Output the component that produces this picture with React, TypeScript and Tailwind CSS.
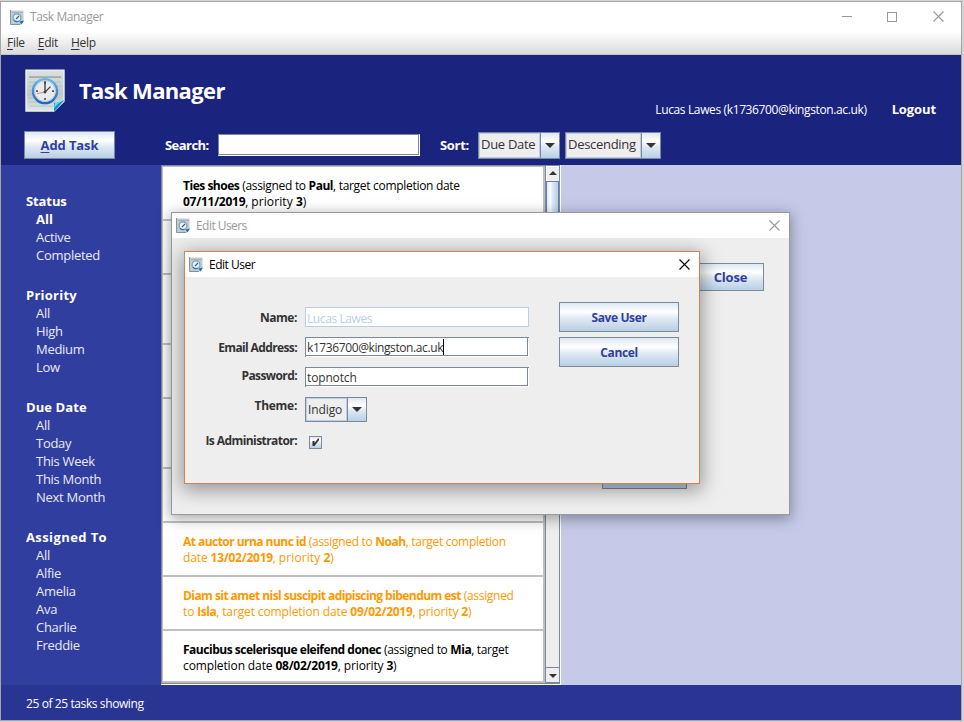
import type { ReactNode } from "react";

function TaskIcon({ size }: { size: number }) {
  return (
    <svg width={size} height={size * 1.08} viewBox="0 0 40 43" className="block shrink-0">
      <defs>
        <linearGradient id="paper" x1="0" y1="0" x2="0" y2="1">
          <stop offset="0" stopColor="#dbe2df" />
          <stop offset="0.6" stopColor="#bfcbc8" />
          <stop offset="1" stopColor="#dfe7e3" />
        </linearGradient>
        <linearGradient id="ring" x1="0" y1="0" x2="0" y2="1">
          <stop offset="0" stopColor="#6db2ee" />
          <stop offset="1" stopColor="#1c69bd" />
        </linearGradient>
      </defs>
      <path d="M1 1H39V32L29 42H1Z" fill="url(#paper)" stroke="#eef3f1" strokeWidth="1.4" />
      <path d="M4 8H36" stroke="#9aa8a6" strokeWidth="1.6" />
      <path d="M4 13H36M4 17H36M4 21H36M4 25H36M4 29H35M4 33H31M4 37H28" stroke="#aebbb9" strokeWidth="0.7" />
      <circle cx="20" cy="22" r="12" fill="#e9eaec" stroke="url(#ring)" strokeWidth="2.4" />
      <circle cx="20" cy="22" r="10.4" fill="none" stroke="#b5bfcc" strokeWidth="0.8" />
      <path d="M20 13V15M20 29V31M11 22H13M27 22H29" stroke="#4b5157" strokeWidth="1.6" />
      <path d="M20 23L12 24.5" stroke="#e98273" strokeWidth="1" />
      <path d="M20 23V12M20 23L25.5 17.5" stroke="#363a3e" strokeWidth="1.3" />
      <circle cx="20" cy="23" r="1.4" fill="#363a3e" />
      <path d="M39.6 31L29 42.6V34Q35 34 39.6 31Z" fill="#0795cf" />
      <path d="M39 31Q35 34 30 33L29 40Q31 35 39 31Z" fill="#7fd4ea" />
    </svg>
  );
}

function SmallIcon() {
  return (
    <svg width="14" height="15" viewBox="0 0 14 15" className="block shrink-0">
      <path d="M0.5 0.5H13.5V11L11 14.5H0.5Z" fill="#c1cccb" />
      <path d="M0.5 0V14.5H10" stroke="#81959a" fill="none" />
      <path d="M2 2.5H13" stroke="#a3b1b2" />
      <circle cx="7" cy="7.7" r="3.9" fill="#e9f0f6" stroke="#6c9fce" strokeWidth="1.2" />
      <path d="M4 10A3.9 3.9 0 0 0 8.5 11.3" fill="none" stroke="#2672bd" strokeWidth="1.2" />
      <path d="M6 9L9 6" stroke="#4c5660" strokeWidth="1.1" />
      <path d="M9.5 11.5L14 10.5L11.5 14.5Z" fill="#176fb3" />
    </svg>
  );
}

function CloseGlyph({ className }: { className: string }) {
  return (
    <svg width="11" height="11" viewBox="0 0 11 11" className={className}>
      <path d="M0.5 0.5L10.5 10.5M10.5 0.5L0.5 10.5" stroke="currentColor" strokeWidth="1.1" />
    </svg>
  );
}

const steel =
  "border border-[#7a8a99] bg-[linear-gradient(to_bottom,#dde8f3_0%,#ffffff_32%,#dfe9f4_55%,#b8cfe5_100%)]";

function Button({ children, className }: { children: ReactNode; className: string }) {
  return (
    <button className={`${steel} flex items-center justify-center font-bold text-[#303f9f] ${className}`}>
      {children}
    </button>
  );
}

function Select({ label, className, textClass }: { label: string; className: string; textClass: string }) {
  return (
    <div className={`flex border border-[#7a8a99] bg-[#eeeeee] ${className}`}>
      <div className="flex min-w-0 flex-1 items-center border border-[#b8cfe5] pl-px whitespace-nowrap text-[#333333]">
        <span className={textClass}>{label}</span>
      </div>
      <div className="flex w-[19px] items-center justify-center border-l border-[#7a8a99] bg-[linear-gradient(to_bottom,#dde8f3_0%,#ffffff_32%,#dfe9f4_55%,#b8cfe5_100%)]">
        <svg width="10" height="5" viewBox="0 0 10 5">
          <path d="M0 0H10L5 5Z" fill="#333333" />
        </svg>
      </div>
    </div>
  );
}

const groups = [
  { title: "Status", items: ["All", "Active", "Completed"], selected: 0, titleClass: "tracking-[-0.1px]" },
  { title: "Priority", items: ["All", "High", "Medium", "Low"], selected: -1, titleClass: "tracking-[0.25px]" },
  { title: "Due Date", items: ["All", "Today", "This Week", "This Month", "Next Month"], selected: -1, titleClass: "tracking-[0.1px]" },
  { title: "Assigned To", items: ["All", "Alfie", "Amelia", "Ava", "Charlie", "Freddie"], selected: -1, titleClass: "tracking-[0.4px]" },
];

function Sidebar() {
  return (
    <nav className="flex w-[160px] flex-col gap-[22px] bg-[#303f9f] pt-[27px] pl-[25px] text-[13px] leading-[18px] text-white">
      {groups.map((g) => (
        <div key={g.title}>
          <div className={`font-bold ${g.titleClass}`}>{g.title}</div>
          {g.items.map((item, i) => (
            <div key={item} className={`pl-[10px] ${i === g.selected ? "font-bold" : "tracking-[-0.28px] text-[#e8eaf6]"}`}>
              {item}
            </div>
          ))}
        </div>
      ))}
    </nav>
  );
}

function Row({ children, className = "h-[54px]" }: { children?: ReactNode; className?: string }) {
  return (
    <div className={`shrink-0 border-b-2 border-[#c0c0c0] pt-[11px] pl-[20px] text-[12px] leading-4 tracking-[-0.3px] whitespace-nowrap ${className}`}>
      {children}
    </div>
  );
}

function Name({ children, className = "tracking-[-0.48px]" }: { children: ReactNode; className?: string }) {
  return <b className={className}>{children}</b>;
}

function Num({ children }: { children: ReactNode }) {
  return <b className="tracking-[-0.25px]">{children}</b>;
}

function SecondLine({ children }: { children: ReactNode }) {
  return <div className="tracking-[-0.12px]">{children}</div>;
}

function TaskList() {
  return (
    <div className="flex w-[400px] border-r border-b border-white">
      <div className="flex w-full border border-[#7a8a99]">
        <div className="flex w-[383px] flex-col overflow-hidden border-t border-r-2 border-l border-[#c0c0c0] bg-white text-black">
          <Row>
            <Name>Ties shoes</Name> (assigned to <Name>Paul</Name>, target completion date
            <SecondLine>
              <Num>07/11/2019</Num>, <span className="tracking-[0.1px]">priority <Num>3</Num>)</span>
            </SecondLine>
          </Row>
          <Row />
          <Row className="h-[70px]" />
          <Row />
          <Row className="h-[70px]" />
          <Row />
          <Row className="h-[54px] text-[#ff9800]">
            <Name className="tracking-[-0.54px]">At auctor urna nunc id</Name> (assigned to <Name>Noah</Name>, target completion
            <SecondLine>
              date <Num>13/02/2019</Num>, <span className="tracking-[0.1px]">priority <Num>2</Num>)</span>
            </SecondLine>
          </Row>
          <Row className="h-[54px] text-[#ff9800]">
            <Name className="tracking-[-0.56px]">Diam sit amet nisl suscipit adipiscing bibendum est</Name> (assigned
            <SecondLine>
              to <Name>Isla</Name>, target completion date <Num>09/02/2019</Num>, priority <Num>2</Num>)
            </SecondLine>
          </Row>
          <Row className="h-[52px] border-b-0">
            <Name>Faucibus scelerisque eleifend donec</Name> (assigned to <Name>Mia</Name>, target
            <SecondLine>
              completion date <Num>08/02/2019</Num>, priority <Num>3</Num>)
            </SecondLine>
          </Row>
        </div>
        <div className="flex flex-1 flex-col border-l border-[#7a8a99] bg-[#eeeeee]">
          <div className="flex h-[15px] items-center justify-center border-t border-l border-white">
            <svg width="8" height="4" viewBox="0 0 8 4" className="-translate-y-px"><path d="M4 0L8 4H0Z" fill="#333" /></svg>
          </div>
          <div className="h-[60px] border border-[#6382bf] bg-[linear-gradient(to_right,#dde8f3_0%,#ffffff_30%,#dfe9f4_50%,#b8cfe5_100%)]" />
          <div className="flex-1" />
          <div className="flex h-[16px] items-center justify-center border-y border-[#7a8a99] pt-[2px]">
            <svg width="8" height="4" viewBox="0 0 8 4"><path d="M0 0H8L4 4Z" fill="#333" /></svg>
          </div>
        </div>
      </div>
    </div>
  );
}

function Header() {
  return (
    <header className="flex h-[110px] flex-col bg-[#1a237e] text-white">
      <div className="flex h-[76px] items-start pl-6">
        <div className="pt-[14px]">
          <TaskIcon size={40} />
        </div>
        <h1 className="mt-[20px] ml-[14px] text-[22px] leading-[30px] font-bold tracking-[-0.65px]">Task Manager</h1>
        <span className="mt-[46px] mr-[25px] ml-auto text-[12px] leading-[18px] tracking-[-0.37px]">
          Lucas Lawes (k1736700@kingston.ac.uk)
        </span>
        <span className="mt-[45px] mr-[25px] text-[13px] leading-[18px] font-bold tracking-[-0.1px]">Logout</span>
      </div>
      <div className="flex items-center pl-[23px]">
        <Button className="h-7 w-[91px] pt-px text-[13px] tracking-[-0.1px]">
          <span><u className="underline-offset-2">A</u>dd Task</span>
        </Button>
        <span className="ml-[50px] w-[53px] pt-px text-[13px] font-bold whitespace-nowrap tracking-[-0.55px]">Search:</span>
        <div className="h-[22px] w-[202px] border border-[#7a8a99] border-r-white border-b-white bg-white">
          <div className="h-full border-r border-b border-[#7a8a99]" />
        </div>
        <span className="ml-5 w-[38px] pt-px text-[13px] font-bold whitespace-nowrap tracking-[-0.3px]">Sort:</span>
        <Select label="Due Date" className="h-[27px] w-[82px]" textClass="text-[13px] tracking-[-0.3px]" />
        <Select label="Descending" className="ml-[5px] h-[27px] w-[96px]" textClass="text-[13px] tracking-[-0.3px]" />
      </div>
    </header>
  );
}

function Field({ value, textClass, caret = false }: { value: string; textClass: string; caret?: boolean }) {
  return (
    <div className="h-5 w-[224px] border-t border-l border-[#7a8a99] bg-white">
      <div className="h-full border-r border-b border-white">
        <div className="flex h-full w-full items-center border-r border-b border-[#7a8a99] pl-px text-[12px] text-[#333]">
          <span className={`pt-[2px] ${textClass}`}>{value}</span>
          {caret && <span className="h-4 w-px bg-black" />}
        </div>
      </div>
    </div>
  );
}

function Label({ children, className }: { children: ReactNode; className: string }) {
  return (
    <div className={`text-right text-[12px] leading-4 font-bold whitespace-nowrap text-[#333] ${className}`}>{children}</div>
  );
}

function EditUser() {
  return (
    <div className="absolute top-[251px] left-[184px] flex h-[233px] w-[516px] flex-col border border-[#cd8452] bg-[#eeeeee] shadow-[0_4px_18px_2px_rgba(0,0,0,0.38)]">
      <div className="flex h-[25px] items-center bg-white pr-[9px] pl-1">
        <SmallIcon />
        <span className="ml-[6px] text-[12px] tracking-[-0.5px] text-black">Edit User</span>
        <CloseGlyph className="ml-auto text-black" />
      </div>
      <div className="flex">
        <div className="w-[112px]">
          <Label className="mt-[33px] tracking-[-0.45px]">Name:</Label>
          <Label className="mt-[14px] tracking-[-0.62px]">Email Address:</Label>
          <Label className="mt-[12px] tracking-[-0.6px]">Password:</Label>
          <Label className="mt-[14px] tracking-[-0.3px]">Theme:</Label>
          <Label className="mt-[19px] tracking-[-0.57px]">Is Administrator:</Label>
        </div>
        <div className="ml-2 w-[224px] pt-[30px]">
          <div className="flex h-5 items-center border border-[#b8cfe5] bg-white pt-[3px] pl-px text-[12px] tracking-[-0.4px] text-[#b8cfe5]">
            Lucas Lawes
          </div>
          <div className="mt-[10px]"><Field value="k1736700@kingston.ac.uk" textClass="tracking-[-0.4px]" caret /></div>
          <div className="mt-[10px]"><Field value="topnotch" textClass="tracking-[-0.15px]" /></div>
          <Select label="Indigo" className="mt-[10px] h-[25px] w-[62px]" textClass="pt-px text-[12px] tracking-[-0.1px]" />
          <div className={`mt-[14px] ml-1 h-[13px] w-[13px] ${steel}`}>
            <svg width="11" height="11" viewBox="0 0 11 11">
              <path d="M2.5 4V9H4.5L9 3V1.5H8L4.5 6V4Z" fill="#333" />
            </svg>
          </div>
        </div>
        <div className="ml-[30px] flex flex-col gap-[5px] pt-[25px] text-[12px] tracking-[-0.4px]">
          <Button className="h-[30px] w-[120px] pt-[2px]">Save User</Button>
          <Button className="h-[30px] w-[120px] pt-[2px]">Cancel</Button>
        </div>
      </div>
    </div>
  );
}

function EditUsers() {
  return (
    <div className="absolute top-[212px] left-[171px] flex h-[303px] w-[619px] flex-col border border-[#999aa0] bg-[#eeeeee] shadow-[0_3px_13px_1px_rgba(0,0,0,0.34)]">
      <div className="flex h-[25px] shrink-0 items-center bg-white pr-[9px] pl-1">
        <SmallIcon />
        <span className="ml-[6px] text-[12px] tracking-[-0.55px] text-[#999]">Edit Users</span>
        <CloseGlyph className="ml-auto text-[#999]" />
      </div>
      <div className="flex flex-1 flex-col items-end justify-between pt-[25px] pb-[25px]">
        <Button className="mr-[25px] h-[28px] w-[67px] pt-[2px] text-[13px] tracking-[-0.2px]">Close</Button>
        <Button className="mr-[102px] h-[28px] w-[85px]">{null}</Button>
      </div>
    </div>
  );
}

export default function App() {
  return (
    <div className="relative h-[722px] w-[964px] overflow-hidden bg-[#d3d3d3] pt-px font-['Open_Sans','Noto_Sans',sans-serif]">
      <div className="flex h-[720px] w-[962px] flex-col border border-[#a5a5a5] bg-white">
        <div className="flex h-[30px] items-center pl-[9px]">
          <SmallIcon />
          <span className="ml-[6px] text-[12px] tracking-[-0.4px] text-[#999]">Task Manager</span>
          <div className="-mt-px ml-auto flex items-center text-[#999]">
            <span className="h-px w-[10px] bg-[#999]" />
            <span className="ml-[35px] h-[10px] w-[10px] border border-[#999]" />
            <CloseGlyph className="mr-[17px] ml-[36px]" />
          </div>
        </div>
        <div className="flex h-[23px] items-center gap-[13px] border-b border-[#c6c6c6] bg-[linear-gradient(to_bottom,#ffffff,#dadada)] pl-[6px] text-[12px] tracking-[-0.3px] text-[#333]">
          <span><u className="underline-offset-2">F</u>ile</span>
          <span><u className="underline-offset-2">E</u>dit</span>
          <span><u className="underline-offset-2">H</u>elp</span>
        </div>
        <Header />
        <div className="flex h-[520px]">
          <Sidebar />
          <TaskList />
          <div className="flex-1 bg-[#c5cae9]" />
        </div>
        <footer className="flex flex-1 items-center bg-[#283593] pt-[3px] pl-[25px] text-[12px] tracking-[-0.4px] text-white">25 of 25 tasks showing</footer>
      </div>
      <EditUsers />
      <EditUser />
    </div>
  );
}
